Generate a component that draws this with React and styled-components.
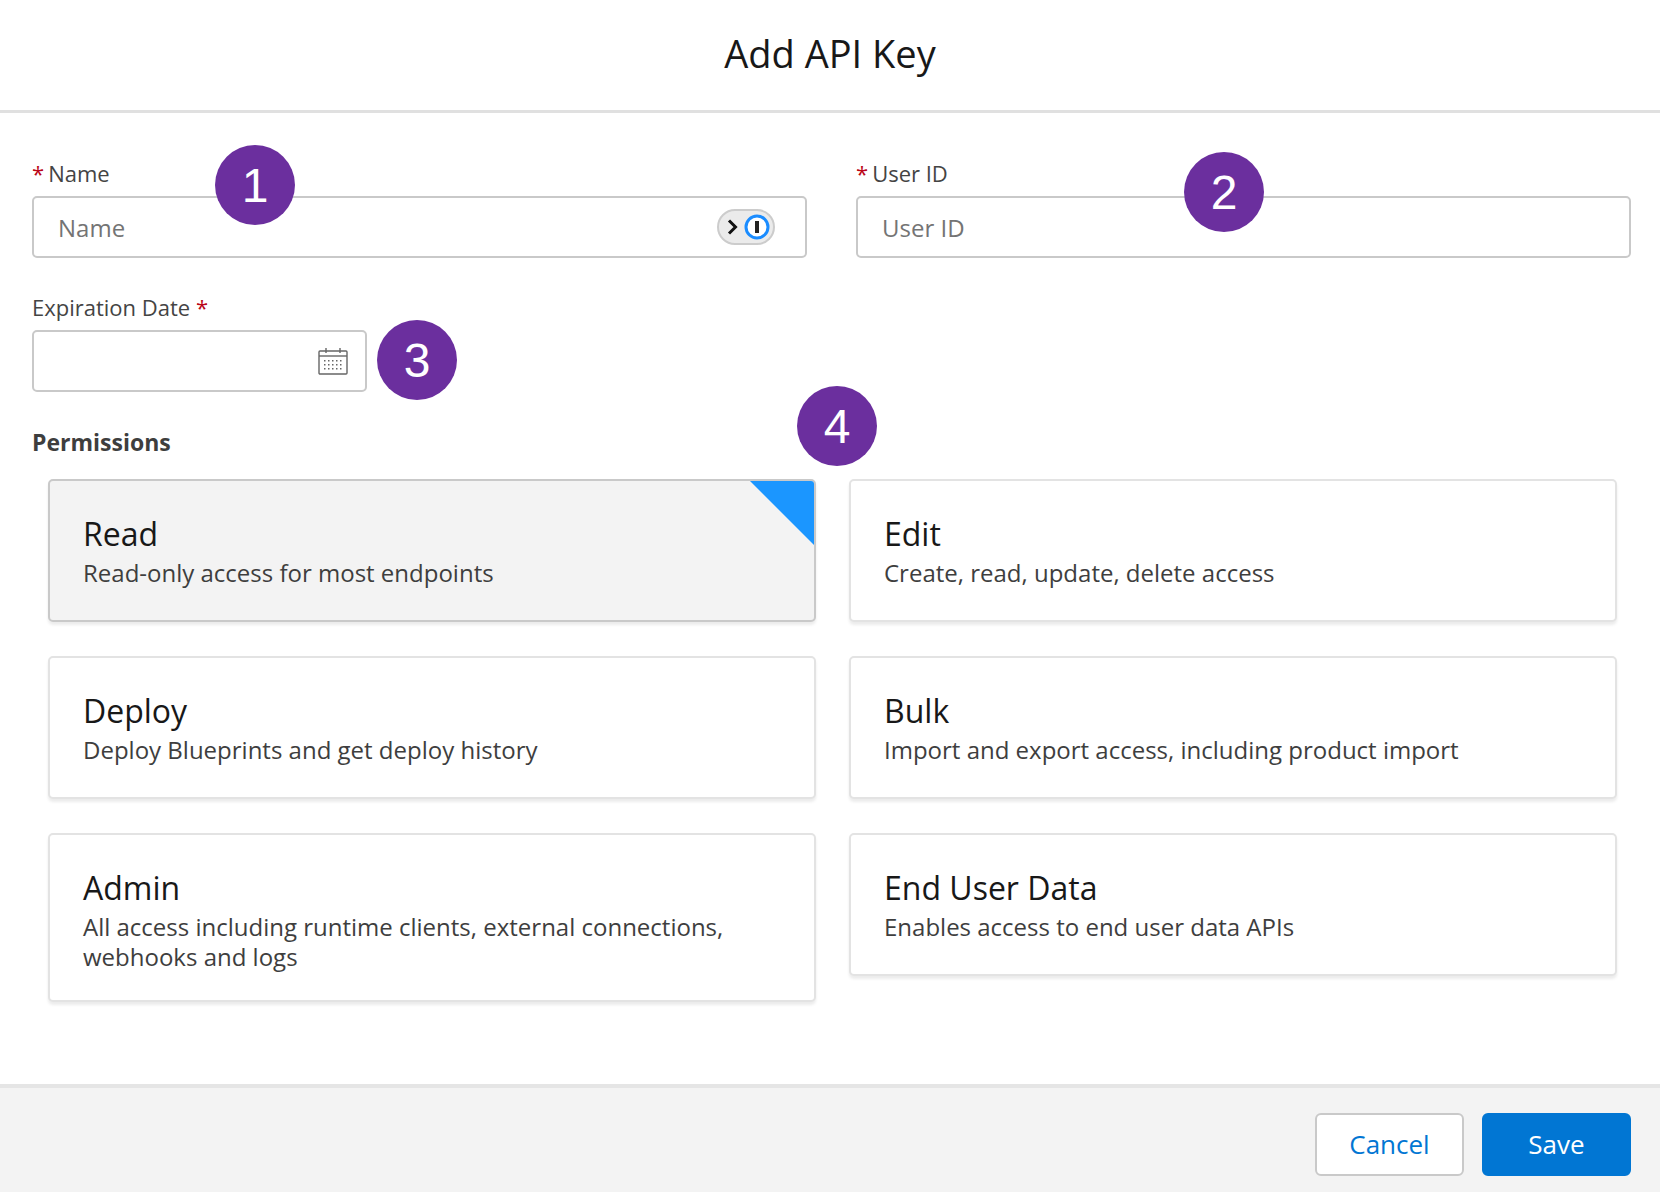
import React from 'react'
import styled, { createGlobalStyle } from 'styled-components'

const Global = createGlobalStyle`
  body { margin: 0; font-family: "Open Sans", "Liberation Sans", sans-serif; color: #181818; background: #fff; }
  * { box-sizing: border-box; }
`

const perms = [
  { title: 'Read', desc: 'Read-only access for most endpoints', selected: true },
  { title: 'Edit', desc: 'Create, read, update, delete access' },
  { title: 'Deploy', desc: 'Deploy Blueprints and get deploy history' },
  { title: 'Bulk', desc: 'Import and export access, including product import' },
  { title: 'Admin', desc: 'All access including runtime clients, external connections, webhooks and logs' },
  { title: 'End User Data', desc: 'Enables access to end user data APIs' },
]

const App = () => (
  <Modal>
    <Global />
    <Header>Add API Key</Header>
    <Body>
      <Row>
        <Field>
          <Label><Req>*</Req>Name</Label>
          <Input>
            <Placeholder>Name</Placeholder>
            <PassPill>
              <svg width="16" height="20" viewBox="0 0 16 20"><path d="M4 3.5l6.5 6.5-6.5 6.5" stroke="#111" strokeWidth="3" fill="none" /></svg>
              <svg width="26" height="26" viewBox="0 0 26 26"><circle cx="13" cy="13" r="11" fill="#fff" stroke="#1a8cff" strokeWidth="3" /><rect x="11" y="7" width="4" height="12" fill="#222" /></svg>
            </PassPill>
          </Input>
        </Field>
        <Field>
          <Label><Req>*</Req>User ID</Label>
          <Input><Placeholder>User ID</Placeholder></Input>
        </Field>
      </Row>
      <DateField>
        <Label>Expiration Date <Req $after>*</Req></Label>
        <Input>
          <span />
          <svg width="32" height="30" viewBox="0 0 32 30" fill="none" stroke="#666" strokeWidth="1.4">
            <rect x="2" y="5" width="28" height="23" rx="1" />
            <line x1="2" y1="10" x2="30" y2="10" />
            <line x1="9" y1="2" x2="9" y2="7" /><line x1="23" y1="2" x2="23" y2="7" />
            {[0, 1, 2].map(r => [0, 1, 2, 3, 4].map(c => (
              <rect key={r + '-' + c} x={7 + c * 4} y={14 + r * 4} width="1.5" height="1.5" fill="#666" stroke="none" />
            )))}
          </svg>
        </Input>
      </DateField>
      <SectionTitle>Permissions</SectionTitle>
      <Grid>
        {perms.map(p => (
          <Card key={p.title} $selected={p.selected}>
            {p.selected && <Corner />}
            <CardTitle>{p.title}</CardTitle>
            <CardDesc>{p.desc}</CardDesc>
          </Card>
        ))}
      </Grid>
      <Badge style={{ left: 215, top: 32 }}>1</Badge>
      <Badge style={{ left: 1184, top: 39 }}>2</Badge>
      <Badge style={{ left: 377, top: 207 }}>3</Badge>
      <Badge style={{ left: 797, top: 273 }}>4</Badge>
    </Body>
    <Footer>
      <Button>Cancel</Button>
      <Button $primary>Save</Button>
    </Footer>
  </Modal>
)

export default App

const Modal = styled.div`
  width: 1660px;
  height: 1192px;
  display: flex;
  flex-direction: column;
  position: relative;
`

const Header = styled.div`
  height: 113px;
  display: flex;
  align-items: center;
  justify-content: center;
  font-size: 38px;
  border-bottom: 3px solid #e0e0e0;
  padding-bottom: 4px;
`

const Body = styled.div`
  flex: 1;
  padding: 45px 29px 0 32px;
  position: relative;
`

const Row = styled.div`
  display: grid;
  grid-template-columns: 775px 775px;
  gap: 49px;
`

const Field = styled.div`
  display: flex;
  flex-direction: column;
`

const DateField = styled(Field)`
  width: 335px;
  margin-top: 34px;
`

const Label = styled.div`
  font-size: 22px;
  color: #444;
  margin-bottom: 8px;
  line-height: 30px;
`

const Req = styled.span`
  color: #ba0517;
  margin-right: ${p => (p.$after ? 0 : 4)}px;
`

const Input = styled.div`
  height: 62px;
  border: 2px solid #c9c9c9;
  border-radius: 5px;
  display: flex;
  align-items: center;
  justify-content: space-between;
  padding: 0 16px 0 24px;
`

const Placeholder = styled.span`
  font-size: 24px;
  color: #747474;
`

const PassPill = styled.div`
  display: flex;
  align-items: center;
  gap: 3px;
  height: 36px;
  padding: 0 3px 0 6px;
  border: 2px solid #ccc;
  border-radius: 18px;
  background: #ebebeb;
  margin-right: 14px;
`

const SectionTitle = styled.div`
  font-size: 23px;
  font-weight: 700;
  color: #3e3e3e;
  margin-top: 34px;
`

const Grid = styled.div`
  display: grid;
  grid-template-columns: 768px 768px;
  column-gap: 33px;
  row-gap: 34px;
  margin: 21px 0 0 16px;
  align-items: start;
`

const Card = styled.div`
  position: relative;
  overflow: hidden;
  min-height: 143px;
  padding: 33px 33px 28px;
  border: 2px solid ${p => (p.$selected ? '#c9c9c9' : '#e3e3e3')};
  border-radius: 5px;
  background: ${p => (p.$selected ? '#f3f3f3' : '#fff')};
  box-shadow: 0 3px 3px rgba(0, 0, 0, 0.08);
`

const Corner = styled.div`
  position: absolute;
  top: 0;
  right: 0;
  width: 0;
  height: 0;
  border-top: 64px solid #1b96ff;
  border-left: 64px solid transparent;
`

const CardTitle = styled.div`
  font-size: 32px;
  line-height: 40px;
  color: #181818;
`

const CardDesc = styled.div`
  font-size: 24px;
  line-height: 30px;
  color: #3e3e3e;
  margin-top: 4px;
  max-width: 680px;
`

const Badge = styled.div`
  position: absolute;
  width: 80px;
  height: 80px;
  border-radius: 50%;
  background: #6b2f9e;
  color: #fff;
  font-size: 48px;
  display: flex;
  align-items: center;
  justify-content: center;
  font-family: "Liberation Sans", sans-serif;
`

const Footer = styled.div`
  height: 108px;
  background: #f3f3f3;
  border-top: 4px solid #e5e5e5;
  display: flex;
  justify-content: flex-end;
  align-items: center;
  gap: 18px;
  padding: 8px 29px 0 0;
`

const Button = styled.button`
  width: 149px;
  height: 63px;
  border-radius: 6px;
  font-size: 26px;
  font-family: inherit;
  border: 2px solid ${p => (p.$primary ? '#0176d3' : '#c9c9c9')};
  background: ${p => (p.$primary ? '#0176d3' : '#fff')};
  color: ${p => (p.$primary ? '#fff' : '#0176d3')};
`
